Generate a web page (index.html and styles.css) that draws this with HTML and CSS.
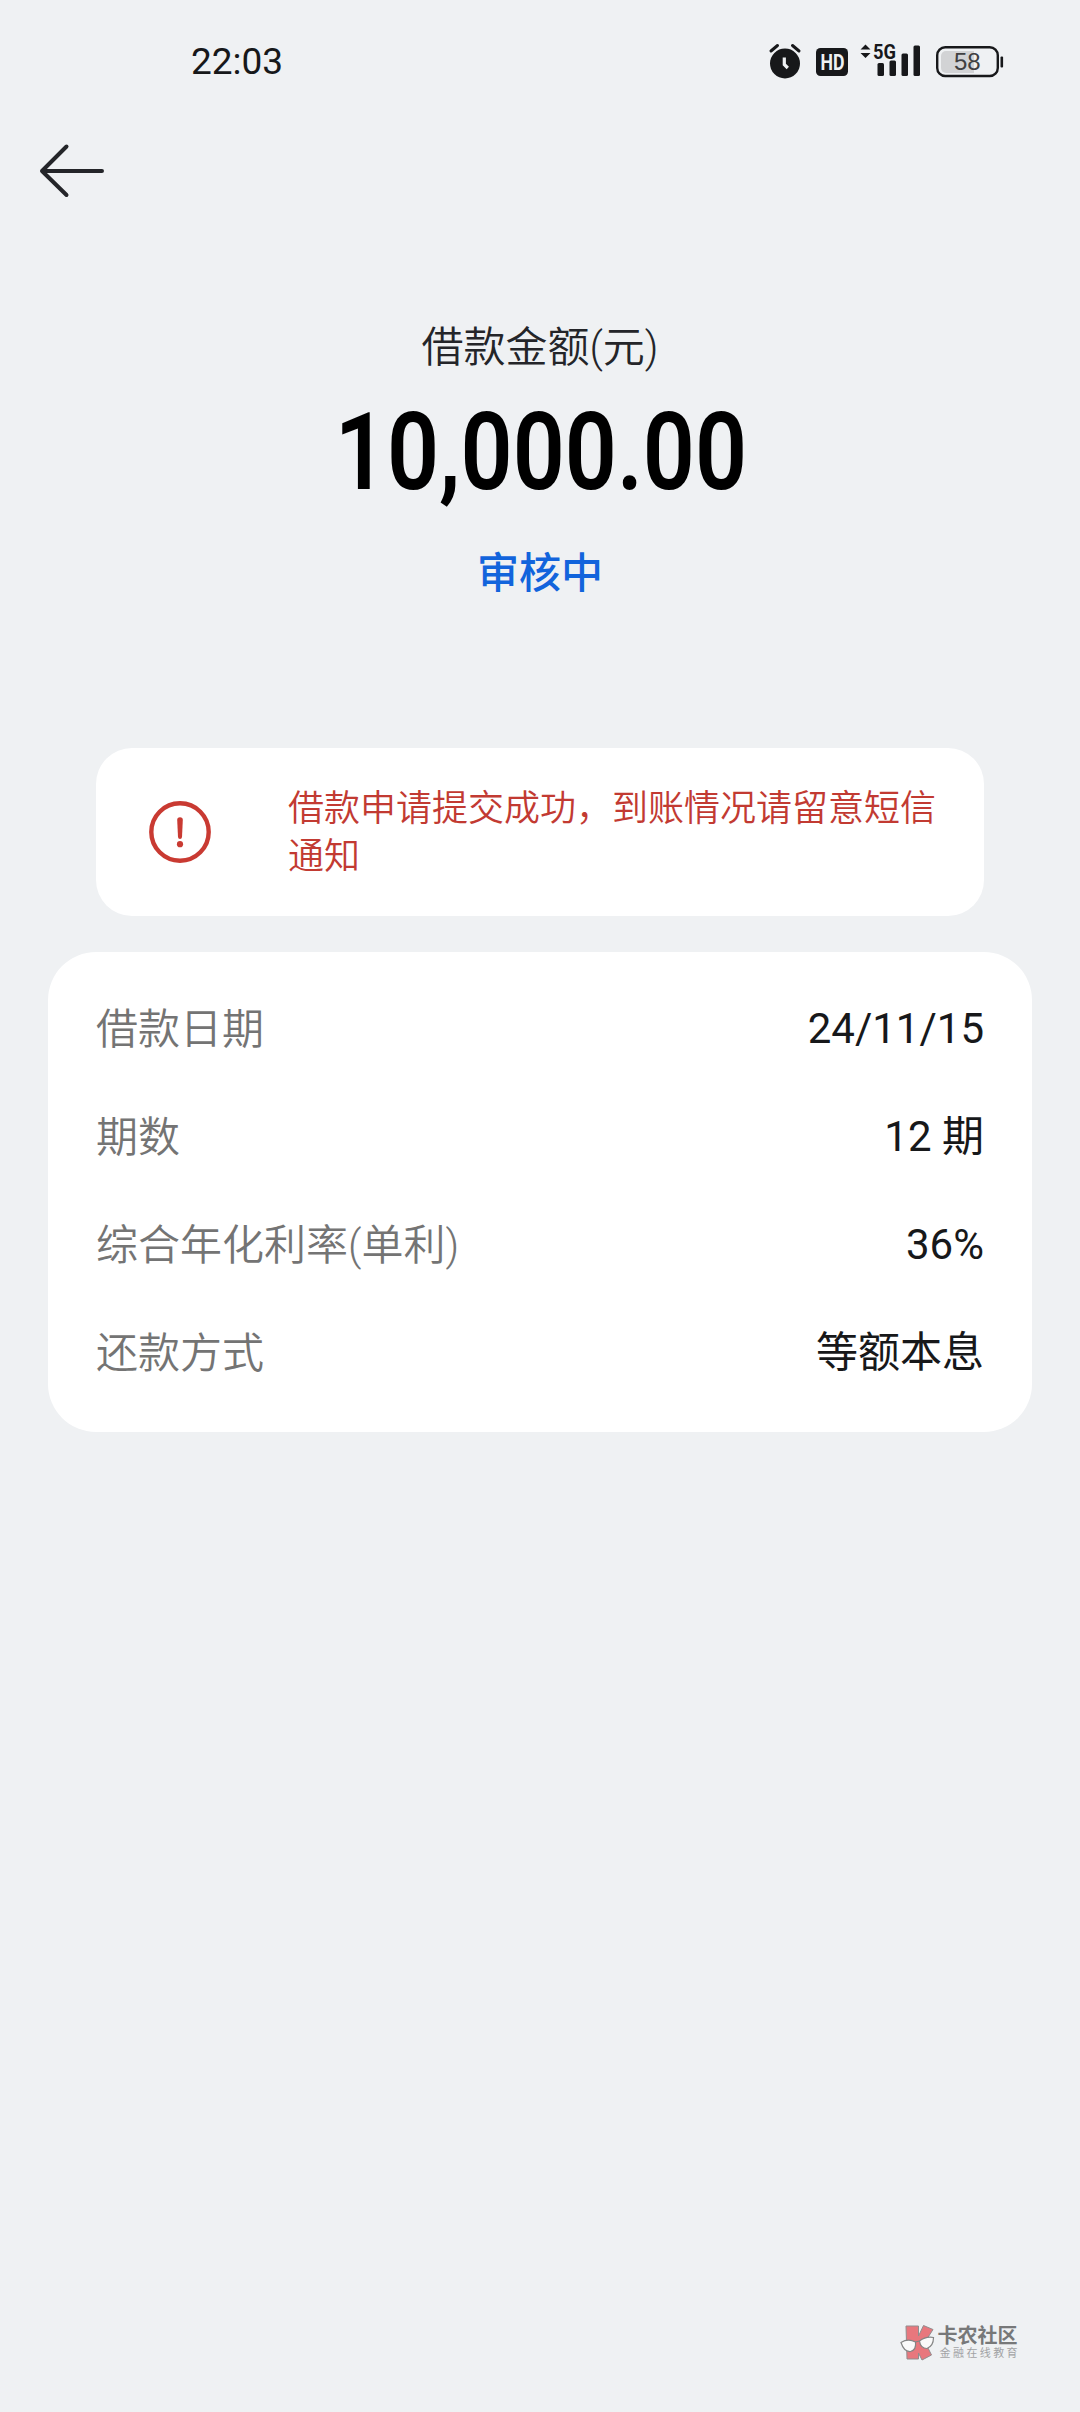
FILE: index.html
```html
<!DOCTYPE html>
<html lang="zh-CN">
<head>
<meta charset="utf-8">
<title>借款详情</title>
<link rel="stylesheet" href="styles.css">
</head>
<body>
<div class="screen">
  <header class="status-bar">
    <time class="clock">22:03</time>
    <div class="status-icons">
      <svg class="alarm" width="32" height="36" viewBox="0 0 32 36">
        <circle cx="16" cy="19.500" r="15" fill="#17181a"/>
        <path d="M2 7 8.500 1.500M30 7 23.500 1.500" stroke="#17181a" stroke-width="3" stroke-linecap="round"/>
        <path d="M15.300 13.500V20.500L18.800 24" fill="none" stroke="#eff1f3" stroke-width="3.200"/>
      </svg>
      <svg class="hd" width="32" height="28" viewBox="0 0 32 28">
        <rect width="32" height="28" rx="4.500" fill="#17181a"/>
        <text class="badge-text" x="4.500" y="22" textLength="24" lengthAdjust="spacingAndGlyphs">HD</text>
      </svg>
      <svg class="signal" width="61" height="40" viewBox="0 -6 61 40">
        <path d="M.500 6.500 5.500 1.500 10.500 6.500ZM.500 10 5.500 15 10.500 10Z" fill="#17181a"/>
        <g fill="#17181a">
          <rect x="17.500" y="20" width="6.500" height="13" rx="1.500"/>
          <rect x="29.500" y="17.500" width="6.500" height="15.500" rx="1.500"/>
          <rect x="41.500" y="10.500" width="6.500" height="22.500" rx="1.500"/>
          <rect x="53.500" y="2.500" width="6.500" height="30.500" rx="1.500"/>
        </g>
        <text class="network-text" x="13" y="15.500" textLength="23" lengthAdjust="spacingAndGlyphs">5G</text>
      </svg>
      <svg class="battery" width="68" height="32" viewBox="0 0 68 32">
        <path d="M10 5H38V27H10A5 5 0 0 1 5 22V10A5 5 0 0 1 10 5Z" fill="#d2d3d5"/>
        <rect x="1.200" y="1.200" width="60.600" height="28.800" rx="8" fill="none" stroke="#17181a" stroke-width="2.400"/>
        <rect x="64.500" y="10.500" width="2.600" height="11" rx="1" fill="#17181a"/>
        <text class="battery-text" x="31.300" y="24" text-anchor="middle">58</text>
      </svg>
    </div>
  </header>

  <nav class="nav">
    <svg class="back" width="68" height="56" viewBox="0 0 68 56">
      <path d="M28.500 3.500 4 28 28.500 52M4 28H64" fill="none" stroke="#242529" stroke-width="4" stroke-linecap="round" stroke-linejoin="round"/>
    </svg>
  </nav>

  <main>
    <section class="summary">
      <h1 class="summary-label">借款金额(元)</h1>
      <p class="amount">10,000.00</p>
      <p class="state">审核中</p>
    </section>

    <section class="notice">
      <svg class="notice-icon" width="62" height="62" viewBox="0 0 62 62">
        <circle cx="31" cy="31" r="28.700" fill="none" stroke="#c93a32" stroke-width="4.400"/>
        <path d="M28.200 19Q28.200 16.200 31 16.200T33.800 19L33 36Q32.800 38 31 38T29 36Z" fill="#c93a32"/>
        <circle cx="31" cy="43.200" r="3.100" fill="#c93a32"/>
      </svg>
      <p class="notice-text">借款申请提交成功，到账情况请留意短信通知</p>
    </section>

    <dl class="details">
      <div class="row"><dt>借款日期</dt><dd>24/11/15</dd></div>
      <div class="row"><dt>期数</dt><dd>12 期</dd></div>
      <div class="row"><dt>综合年化利率(单利)</dt><dd>36%</dd></div>
      <div class="row"><dt>还款方式</dt><dd>等额本息</dd></div>
    </dl>
  </main>

  <footer class="brand">
    <svg class="brand-logo" width="36" height="36" viewBox="0 0 36 36">
      <path d="M6 1H18.500V11L23.500 .500 33 4.500 25 17 31.500 30 22 35 18.500 28V34H7Z" fill="#e8777d" stroke="#918d8e" stroke-width="1"/>
      <path d="M1 17.500Q8 13 15.500 17Q16.500 25 10.500 26.500Q4 27 1 17.500Z" fill="#fafafa" stroke="#858585" stroke-width="1.200"/>
      <path d="M19.500 16Q26 11 33.500 12.500Q33.500 21 27 23.500Q20.500 23.500 19.500 16Z" fill="#fafafa" stroke="#858585" stroke-width="1.200"/>
      <path d="M15.500 17 19.500 16" stroke="#858585" stroke-width="1.200"/>
    </svg>
    <div class="brand-copy">
      <strong class="brand-name">卡农社区</strong>
      <span class="brand-tag">金融在线教育</span>
    </div>
  </footer>
</div>
</body>
</html>
```

FILE: styles.css
```css
* {
  box-sizing: border-box;
}

body,
h1,
p,
dl,
dd {
  margin: 0;
}

body {
  background: #eff1f3;
  font-family: Roboto, "Noto Sans CJK SC", sans-serif;
  color: #17181a;
}

svg {
  display: block;
  flex: none;
  overflow: visible;
}

.screen {
  display: flex;
  flex-direction: column;
  width: 1080px;
  height: 2412px;
}

.status-bar {
  display: flex;
  justify-content: space-between;
  height: 124px;
  padding: 40px 76px 0 191px;
}

.clock {
  font-size: 37px;
  line-height: 44px;
}

.status-icons {
  display: flex;
  align-items: flex-start;
}

.alarm {
  margin: 4px 15px 0 0;
}

.hd {
  margin: 8px 12px 0 0;
}

.signal {
  margin: -3px 15px 0 0;
}

.battery {
  margin-top: 6px;
}

.badge-text {
  font: 700 22px Roboto, sans-serif;
  fill: #eff1f3;
}

.network-text {
  font: 700 21px Roboto, sans-serif;
  fill: #17181a;
  stroke: #eff1f3;
  stroke-width: 2px;
  paint-order: stroke;
}

.battery-text {
  font: 400 24px "Liberation Sans", sans-serif;
  fill: #3f4042;
}

.nav {
  height: 92px;
  padding: 19px 0 0 38px;
}

.summary {
  display: flex;
  flex-direction: column;
  align-items: center;
  height: 532px;
  padding-top: 102px;
}

.summary-label {
  font-size: 42px;
  font-weight: 350;
  line-height: 60px;
  color: #242529;
}

.amount {
  margin-top: 10px;
  font-size: 108px;
  font-weight: 600;
  line-height: 128px;
  color: #000;
  transform: translateX(1px) scaleX(0.845);
}

.state {
  margin-top: 28px;
  font-size: 42px;
  font-weight: 500;
  line-height: 60px;
  color: #1264dc;
}

.notice {
  display: flex;
  align-items: center;
  gap: 77px;
  height: 168px;
  margin: 0 96px;
  padding: 0 48px 0 53px;
  border-radius: 36px;
  background: #fff;
}

.notice-text {
  flex: 1;
  padding-top: 2px;
  font-size: 36px;
  font-weight: 350;
  line-height: 48px;
  color: #c23a32;
}

.details {
  height: 480px;
  margin: 36px 48px 0;
  padding: 23px 48px 25px;
  border-radius: 48px;
  background: #fff;
}

.row {
  display: flex;
  align-items: center;
  justify-content: space-between;
  height: 108px;
  font-size: 42px;
  line-height: 60px;
}

.row dt {
  padding-top: 1px;
  font-weight: 350;
  color: #747474;
}

.brand {
  display: flex;
  gap: 2px;
  margin: auto 60px 51px auto;
}

.brand-copy {
  display: flex;
  flex-direction: column;
}

.brand-name {
  font-size: 20px;
  font-weight: 700;
  line-height: 22px;
  color: #777879;
}

.brand-tag {
  padding-left: 2px;
  font-size: 11px;
  line-height: 13px;
  letter-spacing: 2.4px;
  color: #a2a3a5;
}
```
